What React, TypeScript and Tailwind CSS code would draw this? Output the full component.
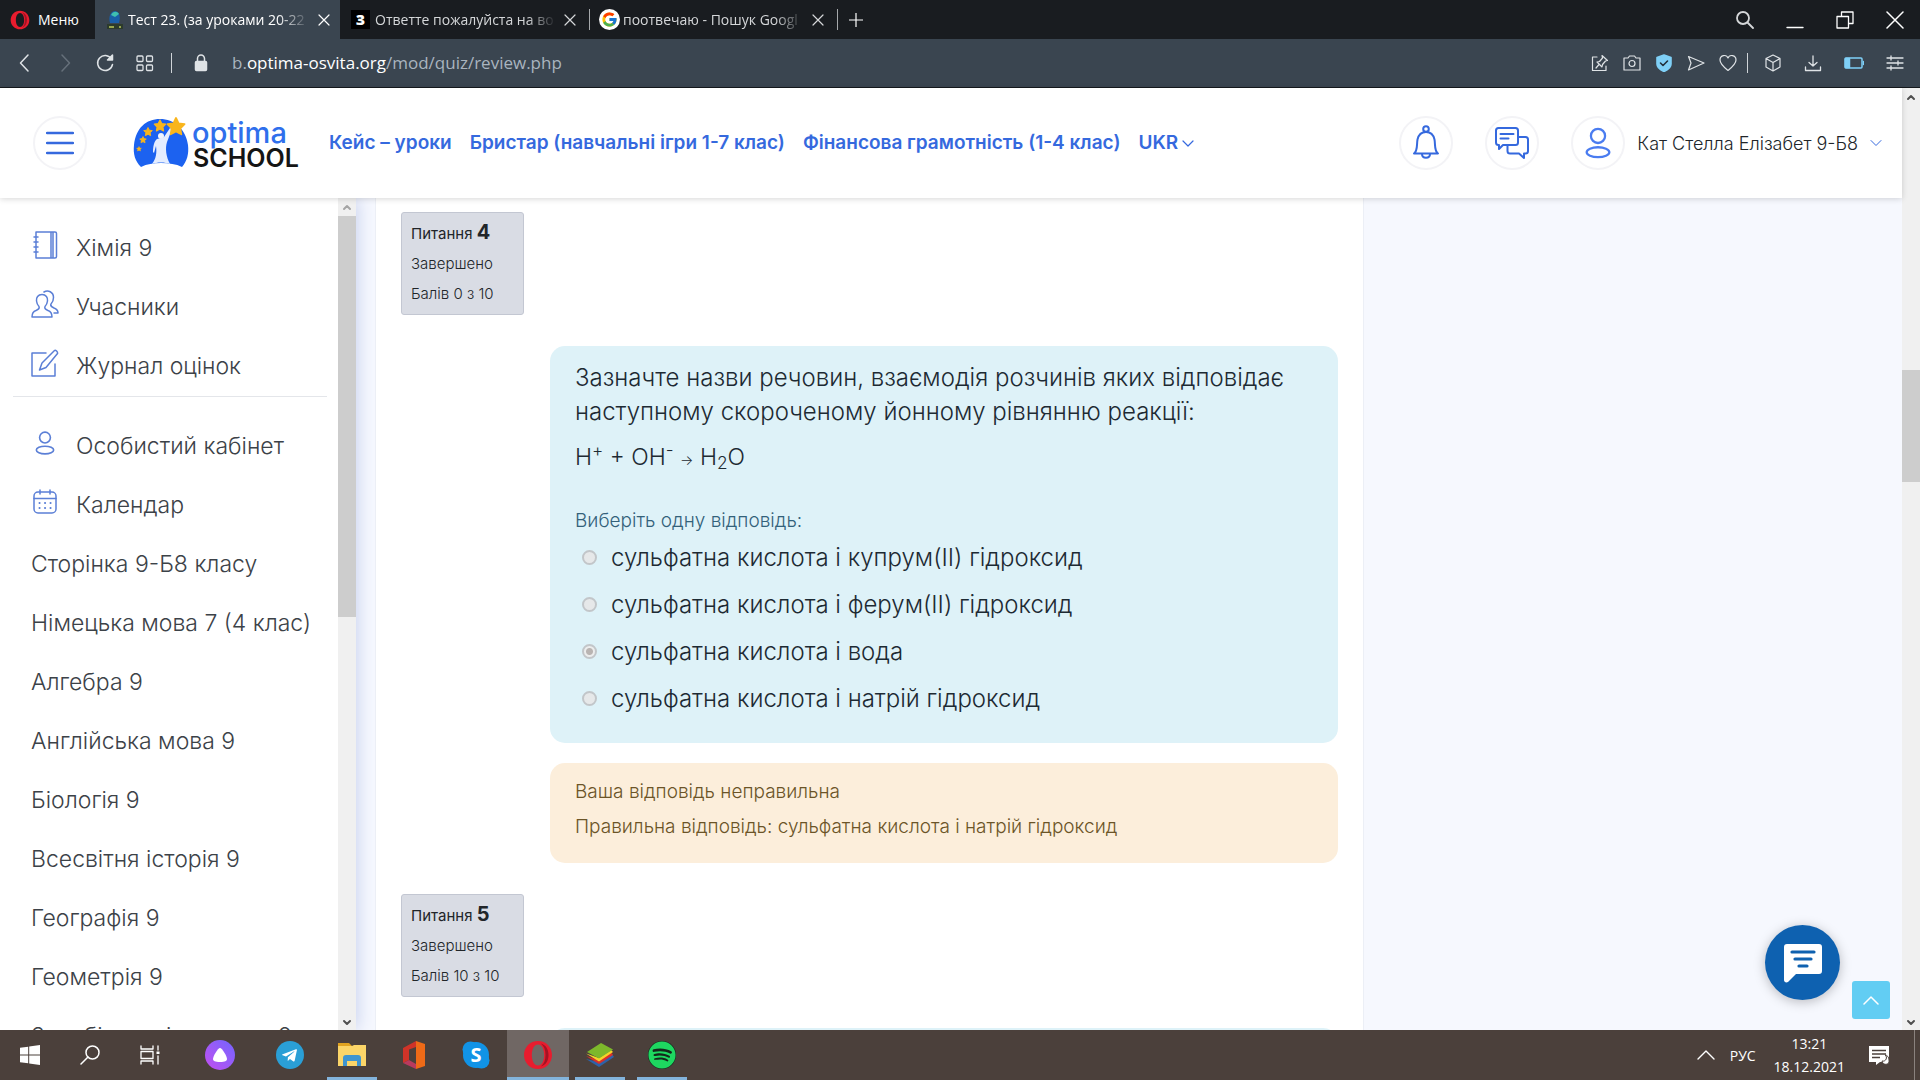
import React from "react";
import { FcGoogle } from "react-icons/fc";
import { FaSpotify, FaTelegramPlane } from "react-icons/fa";

const courses = [
  "Сторінка 9-Б8 класу",
  "Німецька мова 7 (4 клас)",
  "Алгебра 9",
  "Англійська мова 9",
  "Біологія 9",
  "Всесвітня історія 9",
  "Географія 9",
  "Геометрія 9",
  "Зарубіжна література 9",
];

const answers = [
  "сульфатна кислота і купрум(II) гідроксид",
  "сульфатна кислота і ферум(II) гідроксид",
  "сульфатна кислота і вода",
  "сульфатна кислота і натрій гідроксид",
];

const Icon = ({ size = 20, box = 24, sw = 1.5, className = "", children }: any) => (
  <svg
    width={size}
    height={size}
    viewBox={`0 0 ${box} ${box}`}
    fill="none"
    stroke="currentColor"
    strokeWidth={sw}
    strokeLinecap="round"
    strokeLinejoin="round"
    className={`shrink-0 ${className}`}
    aria-hidden="true"
  >
    {children}
  </svg>
);

const Cross = ({ size = 12 }: any) => (
  <Icon size={size} box={12} sw={1.2}>
    <path d="M1 1l10 10M11 1L1 11" />
  </Icon>
);

const OperaLogo = ({ size = 20 }: any) => (
  <svg width={size} height={size} viewBox="0 0 30 30" className="shrink-0" aria-hidden="true">
    <path
      fillRule="evenodd"
      fill="#e81c2e"
      d="M15 1C7 1 1 7.200 1 15s6 14 14 14 14-6.200 14-14S23 1 15 1zm0 3.500c3.800 0 6.200 4.700 6.200 10.500S18.800 25.500 15 25.500 8.800 20.800 8.800 15 11.200 4.500 15 4.500z"
    />
    <path fill="#a31324" d="M18 3.500c5 1.500 7.500 6 7.500 11.500S23 25 18 26.500c3-2.500 4.500-6.500 4.500-11.500S21 6 18 3.500z" />
  </svg>
);

const PersonPaths = () => (
  <>
    <circle cx="12" cy="7" r="5" />
    <ellipse cx="12" cy="18.500" rx="8" ry="3.500" />
  </>
);

const TabDivider = () => <span className="h-[21px] w-px self-center bg-[#a5a8ab]" />;

const TitleBar = () => (
  <div className="flex h-[39px] shrink-0 bg-[#191c20] text-[14px] text-white">
    <button className="flex w-[95px] items-center gap-2 pl-[10px]">
      <OperaLogo size={20} />
      Меню
    </button>
    <div className="flex w-[245px] items-center bg-[#3a4550] pr-[10px] pl-[11px]">
      <svg width="18" height="20" viewBox="0 0 18 20" className="shrink-0" aria-hidden="true">
        <path d="M4 13C2 6 5 1 9 1s6 5 4 12z" fill="#1a5fa8" />
        <path d="M5 5c2-4 6-4 8-1l-4 3z" fill="#3fc0b0" />
        <path d="M1 14h16v5H1z" fill="#2c3b2c" />
        <path d="M3 17h5M13 17h2" stroke="#b9c95b" strokeWidth="1.500" />
      </svg>
      <span className="ml-1 flex-1 overflow-hidden whitespace-nowrap [mask-image:linear-gradient(to_right,black_82%,transparent)]">
        Тест 23. (за уроками 20-22
      </span>
      <button aria-label="Закрити вкладку" className="ml-2">
        <Cross />
      </button>
    </div>
    <div className="flex w-[249px] items-center pr-[13px] pl-[11px] text-[#d5d7d9]">
      <span className="flex size-[19px] shrink-0 items-center justify-center bg-black font-extrabold text-white">
        З
      </span>
      <span className="ml-[5px] flex-1 overflow-hidden whitespace-nowrap [mask-image:linear-gradient(to_right,black_84%,transparent)]">
        Ответте пожалуйста на во
      </span>
      <button aria-label="Закрити вкладку" className="ml-2">
        <Cross />
      </button>
    </div>
    <TabDivider />
    <div className="flex w-[247px] items-center pr-[13px] pl-[9px] text-[#d5d7d9]">
      <span className="flex size-[21px] shrink-0 items-center justify-center rounded-full bg-white">
        <FcGoogle size={17} />
      </span>
      <span className="ml-[3px] flex-1 overflow-hidden whitespace-nowrap [mask-image:linear-gradient(to_right,black_84%,transparent)]">
        поотвечаю - Пошук Googl
      </span>
      <button aria-label="Закрити вкладку" className="ml-2">
        <Cross />
      </button>
    </div>
    <TabDivider />
    <button aria-label="Нова вкладка" className="pl-[11px]">
      <Icon size={14} box={14} sw={1.2}>
        <path d="M7 0v14M0 7h14" />
      </Icon>
    </button>
    <div className="ml-auto flex items-center gap-8 pr-4">
      <button aria-label="Пошук" className="text-[#d5d7d9]">
        <Icon size={18} box={18} sw={1.8}>
          <circle cx="7" cy="7" r="6" />
          <path d="M11.500 11.500L17 17" />
        </Icon>
      </button>
      <button aria-label="Згорнути">
        <Icon size={18} box={18} sw={1.4}>
          <path d="M1 16.500h16" />
        </Icon>
      </button>
      <button aria-label="Розгорнути">
        <Icon size={18} box={18} sw={1.3}>
          <path d="M1 5.500h11.500V17H1zM5.500 5V1H17v11.500h-4" />
        </Icon>
      </button>
      <button aria-label="Закрити">
        <Icon size={18} box={18} sw={1.5}>
          <path d="M1 1l16 16M17 1L1 17" />
        </Icon>
      </button>
    </div>
  </div>
);

const AddressBar = () => (
  <div className="flex h-[49px] shrink-0 items-center border-b border-[#15191d] bg-[#3a4550] text-[#dfe3e6]">
    <button aria-label="Назад" className="ml-[15px]">
      <Icon size={20} box={20}>
        <path d="M13 2L5.500 10l7.500 8" />
      </Icon>
    </button>
    <button aria-label="Вперед" className="ml-5 text-[#66707a]">
      <Icon size={20} box={20}>
        <path d="M7 2l7.500 8L7 18" />
      </Icon>
    </button>
    <button aria-label="Оновити" className="ml-5">
      <Icon size={20} box={20}>
        <path d="M16.500 6A7.500 7.500 0 1 0 17.500 11.500" />
        <path d="M17.500 2v5h-5z" fill="currentColor" />
      </Icon>
    </button>
    <button aria-label="Експрес-панель" className="ml-5">
      <Icon size={20} box={20} sw={1.3}>
        <rect x="2" y="3" width="6" height="5.500" rx="1" />
        <rect x="11.500" y="3" width="6" height="5.500" rx="1" />
        <rect x="2" y="12" width="6" height="5.500" rx="1" />
        <rect x="11.500" y="12" width="6" height="5.500" rx="1" />
      </Icon>
    </button>
    <span className="ml-4 h-5 w-px bg-[#cfd4d8]" />
    <Icon size={18} box={18} className="ml-5">
      <path d="M5.500 7V4.500a3.500 3.500 0 0 1 7 0V7" />
      <rect x="3.500" y="7.500" width="11" height="9" rx="1" fill="currentColor" />
    </Icon>
    <div className="ml-[22px] flex-1 text-[17px] text-[#a9b4bf]">
      <span>b.</span>
      <span className="text-white">optima-osvita.org</span>
      <span>/mod/quiz/review.php</span>
    </div>
    <div className="flex items-center gap-[14px]">
      <Icon size={18} box={18} sw={1.2}>
        <path d="M6 3H1.500v13.500H15V12M11 1.500l5.500 5-2 .5-3 3.500-.5 2.500-5-5 2.500-.5 3-3.500zM8 10.500L5 14" />
      </Icon>
      <Icon size={18} box={18} sw={1.2}>
        <path d="M1 4h4l1.500-2h5L13 4h4v12H1z" />
        <circle cx="9" cy="9.500" r="3" />
      </Icon>
      <Icon size={18} box={18} sw={1.6} className="text-[#7fd0f7]">
        <path d="M9 1l7 2.500V10c0 3.500-3.500 6-7 7.500C5.500 16 2 13.500 2 10V3.500z" fill="currentColor" />
        <path d="M5.500 9l2.500 2.500L12.500 7" stroke="#22303c" />
      </Icon>
      <Icon size={18} box={18} sw={1.2}>
        <path d="M1.500 2.500L17 9 1.500 16l2.500-7z" />
      </Icon>
      <Icon size={18} box={18} sw={1.2}>
        <path d="M9 16.500C4 12.500 1 9.500 1 6c0-5 6.500-6 8-2 1.500-4 8-3 8 2 0 3.500-3 6.500-8 10.500z" />
      </Icon>
    </div>
    <span className="ml-[10px] h-5 w-px bg-[#cfd4d8]" />
    <div className="ml-4 flex items-center gap-[22px] pr-4">
      <Icon size={18} box={18} sw={1.2}>
        <path d="M9 1l7 3.500v8.500l-7 4-7-4V4.500zM2 4.500l7 4 7-4M9 8.500V17" />
      </Icon>
      <Icon size={18} box={18} sw={1.3}>
        <path d="M9 2v10M5 8.500L9 12l4-3.500M1.500 13v3.500h15V13" />
      </Icon>
      <Icon size={20} box={20} sw={1.5} className="text-[#7fd0f7]">
        <rect x="1" y="5" width="17" height="10" rx="1" />
        <path d="M1.500 5.500h4v9h-4z" fill="currentColor" />
        <path d="M19.500 8.500v3" />
      </Icon>
      <Icon size={18} box={18} sw={1.3}>
        <path d="M1 4h16M1 9h16M1 14h16M5 2v4M12 7v4M5 12v4" />
      </Icon>
    </div>
  </div>
);

const Logo = () => (
  <svg width="170" height="56" viewBox="0 0 170 56" aria-label="Optima School">
    <path
      d="M8 52C2 46 0 39 1 30 3 13 13 4 27 4s26 10 28 26c1 9-1 16-6 22-6-3-13-4-21-4s-14 1-20 4z"
      fill="#1c62f0"
    />
    <circle cx="28" cy="21" r="3" fill="#f0f5ff" />
    <path
      d="M24 24c3-1 6-1 7-2l6-9 2 1-5 13c-2 6-1 15 3 22-5-2-13-2-18 0 4-5 5-11 4-18l-2 7-1-1c0-5 1-11 4-13z"
      fill="#e4edff"
    />
    {[
      [6, 34, 2.5],
      [10, 25, 3.5],
      [15, 17, 4.5],
      [27, 11, 6],
      [43, 12, 9],
    ].map(([x, y, r]) => (
      <polygon
        key={x}
        transform={`translate(${x} ${y}) scale(${r})`}
        points="0,-1 .29,-.4 .95,-.31 .48,.16 .59,.81 0,.5 -.59,.81 -.48,.16 -.95,-.31 -.29,-.4"
        fill="#f9b51c"
        stroke="#f9b51c"
        strokeWidth=".2"
        strokeLinejoin="round"
      />
    ))}
    <text x="59" y="28" fontFamily="Inter, sans-serif" fontSize="29" fontWeight="500" fill="#2f6fec">
      optima
    </text>
    <text x="60" y="52" fontFamily="Inter, sans-serif" fontSize="25" fontWeight="600" fill="#151515">
      SCHOOL
    </text>
  </svg>
);

const RoundButton = ({ label, children }: any) => (
  <button
    aria-label={label}
    className="flex size-[54px] shrink-0 items-center justify-center rounded-full border-2 border-[#f3f3f6] text-[#3569de]"
  >
    {children}
  </button>
);

const SiteHeader = () => (
  <header className="relative z-10 flex h-[110px] shrink-0 items-center bg-white pr-[20px] pl-[33px] shadow-[0_1px_6px_rgba(0,0,0,0.16)]">
    <RoundButton label="Меню сайту">
      <Icon size={28} box={28} sw={2.4}>
        <path d="M1 4h26M1 14h26M1 24h26" />
      </Icon>
    </RoundButton>
    <a href="#" className="ml-[46px]">
      <Logo />
    </a>
    <nav className="ml-[26px] flex items-center gap-[18px] text-[19px] font-semibold whitespace-nowrap text-[#3569de]">
      <a href="#">Кейс – уроки</a>
      <a href="#">Бристар (навчальні ігри 1-7 клас)</a>
      <a href="#">Фінансова грамотність (1-4 клас)</a>
      <button className="flex items-center gap-1">
        UKR
        <Icon size={12} box={12} sw={1.2}>
          <path d="M1 4l5 5 5-5" />
        </Icon>
      </button>
    </nav>
    <div className="ml-auto flex items-center gap-8">
      <RoundButton label="Сповіщення">
        <Icon size={36} box={36} sw={2}>
          <circle cx="18" cy="4" r="2.800" />
          <path d="M6 28.500c4-3 2.500-9 3.500-14 1-4.500 4-7.500 8.500-7.500s7.500 3 8.500 7.500c1 5-.5 11 3.500 14zM14 29c0 5 8 5 8 0" />
        </Icon>
      </RoundButton>
      <RoundButton label="Повідомлення">
        <Icon size={34} box={34} sw={2}>
          <path d="M13 19H8l-4 4v-4H3.500C2 19 1 18 1 16.500v-12C1 3 2 2 3.500 2h17C22 2 23 3 23 4.500v12c0 1.500-1 2.500-2.500 2.500z" />
          <path d="M23 11h7.500c1.500 0 2.500 1 2.500 2.500V25c0 1.500-1 2.500-2.500 2.500H29v4.500l-5-4.500h-9c-1.500 0-2.500-1-2.500-2.500v-5M5.500 8h13M5.500 12.500h8" />
        </Icon>
      </RoundButton>
      <button className="flex items-center gap-3 text-[18px] font-light text-[#212529]">
        <span className="flex size-[54px] items-center justify-center rounded-full border-2 border-[#f3f3f6] text-[#4a7cf0]">
          <Icon size={34} sw={1.6}>
            <PersonPaths />
          </Icon>
        </span>
        Кат Стелла Елізабет 9-Б8
        <Icon size={12} box={12} sw={1} className="text-[#3569de]">
          <path d="M1 3.500l5 5 5-5" />
        </Icon>
      </button>
    </div>
  </header>
);

const Scroller = ({ space, thumb, dimTop }: any) => (
  <div className="flex w-[18px] shrink-0 flex-col items-center bg-[#f0f0f0]">
    <Icon size={10} box={10} sw={2} className={dimTop ? "my-1 text-[#a5a5a5]" : "my-1 text-[#505050]"}>
      <path d="M2 7l3-3 3 3" />
    </Icon>
    <div className={space} />
    <div className={`w-full bg-[#cdcdcd] ${thumb}`} />
    <Icon size={10} box={10} sw={2} className="mt-auto mb-[2px] text-[#505050]">
      <path d="M2 3l3 3 3-3" />
    </Icon>
  </div>
);

const MenuLink = ({ label, children }: any) => (
  <li>
    <a href="#" className="flex h-[59px] items-center pl-[31px] whitespace-nowrap">
      {children && <span className="-mt-2 mr-[17px] flex w-7 justify-center text-[#5b7fd6]">{children}</span>}
      {label}
    </a>
  </li>
);

const Sidebar = () => (
  <aside className="relative flex w-[356px] shrink-0 bg-white shadow-[2px_0_16px_#c9d2ee]">
    <nav className="flex-1 overflow-hidden pt-[21px] text-[23px] font-light text-[#3c4248]">
      <ul>
        <MenuLink label="Хімія 9">
          <Icon size={28} box={28}>
            <path d="M5 1h19c1 0 1.500.5 1.500 1.500v23c0 1-.5 1.500-1.500 1.500H5zM20 1v26M22 1v26M3 6h4M3 11h4M3 16h4M3 21h4" />
          </Icon>
        </MenuLink>
        <MenuLink label="Учасники">
          <Icon size={28} box={28}>
            <path d="M11 4.500c-4 0-6 3-5.500 6.500.3 2.500 1 4 2.500 5.500 1 2-1 3-3 4-3 1-4 2.500-4 6.500h20c0-4-1-5.500-4-6.500-2-1-4-2-3-4 1.500-1.500 2.200-3 2.500-5.500.5-3.500-1.500-6.500-5.500-6.500z" />
            <path d="M13 2c4-2.500 9.500 0 9.500 5.500 0 3-1 5-2.500 6.500-1 2 1 3 3 4 3 1 4 2 4 5h-4" />
          </Icon>
        </MenuLink>
        <MenuLink label="Журнал оцінок">
          <Icon size={28} box={28}>
            <path d="M15 4H1v23h23V15M23.500 1.500c1-1 3.500 1.500 3 3L15 18.500 8.500 21l2.500-7z" />
          </Icon>
        </MenuLink>
      </ul>
      <hr className="mr-[11px] mb-[20px] ml-[13px] border-[#e4e6ea]" />
      <ul>
        <MenuLink label="Особистий кабінет">
          <Icon size={26} box={24}>
            <PersonPaths />
          </Icon>
        </MenuLink>
        <MenuLink label="Календар">
          <Icon size={26} box={26}>
            <rect x="2" y="3" width="22" height="21" rx="4" />
            <path d="M2 9.500h22M8 1v4M18 1v4" />
            <path d="M7.500 14h.1M13 14h.1M18.500 14h.1M7.500 19h.1M13 19h.1M18.500 19h.1" strokeWidth="2" />
          </Icon>
        </MenuLink>
        {courses.map((name) => (
          <MenuLink key={name} label={name} />
        ))}
      </ul>
    </nav>
    <Scroller space="" thumb="h-[401px]" dimTop />
  </aside>
);

const QuestionInfo = ({ number, grade }: any) => (
  <div className="w-[123px] shrink-0 self-start rounded-[3px] border border-[#c3c7d2] bg-[#d9dce4] pt-[6px] pb-[5px] pl-[9px] text-[15px] leading-[30px] font-light text-[#212529]">
    <h3 className="font-normal">
      Питання <span className="text-[20px] leading-none font-bold">{number}</span>
    </h3>
    <div>Завершено</div>
    <div>{grade}</div>
  </div>
);

const QuestionFour = () => (
  <section className="flex gap-[26px]">
    <QuestionInfo number="4" grade="Балів 0 з 10" />
    <div className="mt-[134px] min-w-0 flex-1">
      <div className="rounded-[15px] bg-[#def2f8] px-[25px] pt-[15px] pb-[21px] text-[24px] leading-[34px] font-light text-[#1d2a33]">
        <p>
          Зазначте назви речовин, взаємодія розчинів яких відповідає наступному скороченому йонному рівнянню реакції:
        </p>
        <p className="mt-[11px] text-[23px]">
          H<sup>+</sup> + OH<sup>-</sup> <span className="text-sm">→</span> H<sub>2</sub>O
        </p>
        <fieldset className="mt-[34px]">
          <legend className="text-[19px] leading-[26px] text-[#33617a]">Виберіть одну відповідь:</legend>
          {answers.map((answer, i) => (
            <div key={answer} className="flex h-[47px] items-center pl-[7px]">
              <input
                type="radio"
                id={`q4-${i}`}
                name="q4"
                disabled
                defaultChecked={i === 2}
                className="size-[15px] appearance-none rounded-full border-2 border-[#c2c6c9] bg-[#e6e8e9] checked:bg-[radial-gradient(circle,#b9b4b2_3px,#eceded_4px)]"
              />
              <label htmlFor={`q4-${i}`} className="ml-[14px]">
                {answer}
              </label>
            </div>
          ))}
        </fieldset>
      </div>
      <div className="mt-5 rounded-[15px] bg-[#fceedb] px-[25px] pt-[11px] pb-[19px] text-[19px] leading-[35px] font-light text-[#6b5427]">
        <p>Ваша відповідь неправильна</p>
        <p>Правильна відповідь: сульфатна кислота і натрій гідроксид</p>
      </div>
    </div>
  </section>
);

const TaskItem = ({ label, open, active, children }: any) => (
  <button
    aria-label={label}
    className={`relative flex h-full w-[62px] items-center justify-center ${active ? "bg-[#706764]" : ""}`}
  >
    {children}
    {open && (
      <span className={`absolute bottom-0 h-[3px] bg-[#83b4dc] ${active ? "inset-x-0" : "inset-x-[6px]"}`} />
    )}
  </button>
);

const Taskbar = () => (
  <footer className="relative z-20 flex h-[50px] shrink-0 items-center bg-[#4b403b] text-white">
    <button aria-label="Пуск" className="flex w-[60px] justify-center">
      <svg width="20" height="20" viewBox="0 0 20 20" fill="#fff" aria-hidden="true">
        <path d="M0 2.800L8.200 1.700v7.800H0zM9.200 1.500L20 0v9.500H9.200zM0 10.500h8.200v7.800L0 17.200zM9.200 10.500H20V20L9.200 18.500z" />
      </svg>
    </button>
    <button aria-label="Пошук" className="flex w-[60px] justify-center">
      <Icon size={20} box={20}>
        <circle cx="12.500" cy="7.500" r="6.500" />
        <path d="M8 12L1 19" />
      </Icon>
    </button>
    <button aria-label="Подання завдань" className="flex w-[60px] justify-center">
      <Icon size={20} box={20} sw={1.3}>
        <path d="M1 1v3h12V1M1 19v-3h12v3M1 6.500h12v7H1zM18 1v4M18 11v8" />
        <path d="M16.500 6.500h3v2.500h-3z" fill="currentColor" stroke="none" />
      </Icon>
    </button>
    <button aria-label="Аліса" className="flex w-[79px] justify-center">
      <span className="flex size-[30px] items-center justify-center rounded-full bg-linear-to-tr from-[#c14cf0] to-[#6f63ff]">
        <svg width="16" height="16" viewBox="0 0 16 16" aria-hidden="true">
          <path d="M8 1C6 1 1 9 1 12c0 2 2 3 7 3s7-1 7-3c0-3-5-11-7-11z" fill="#fff" />
        </svg>
      </span>
    </button>
    <TaskItem label="Telegram">
      <span className="flex size-[28px] items-center justify-center rounded-full bg-[#2a9fd6]">
        <FaTelegramPlane size={17} className="-ml-[2px]" />
      </span>
    </TaskItem>
    <TaskItem label="Провідник" open>
      <svg width="28" height="26" viewBox="0 0 28 26" aria-hidden="true">
        <path d="M0 1h11l3 3H0z" fill="#e0a321" />
        <path d="M0 4h14l2-1h12v21H0z" fill="#fbd568" />
        <path d="M5 24V16c0-2 1-3 3-3h12c2 0 3 1 3 3v8h-4v-5H9v5z" fill="#3f95cf" />
      </svg>
    </TaskItem>
    <TaskItem label="Office">
      <svg width="24" height="28" viewBox="0 0 24 28" aria-hidden="true">
        <path d="M14 0l9 3v22l-9 3z" fill="#ee6a17" />
        <path d="M1 7L14 0v6l-7 2.500V19l-6 3z" fill="#cf3328" />
        <path d="M1 22l6-3 7 4v5z" fill="#b83a5e" />
      </svg>
    </TaskItem>
    <TaskItem label="Skype">
      <svg width="28" height="28" viewBox="0 0 28 28" aria-hidden="true">
        <g fill="#1193e6">
          <circle cx="8.500" cy="8.500" r="8" />
          <circle cx="19.500" cy="19.500" r="8" />
          <circle cx="14" cy="14" r="13" />
        </g>
        <text x="14" y="21" textAnchor="middle" fontFamily="Open Sans, sans-serif" fontSize="20" fontWeight="700" fill="#fff">
          S
        </text>
      </svg>
    </TaskItem>
    <TaskItem label="Opera" open active>
      <OperaLogo size={30} />
    </TaskItem>
    <TaskItem label="BlueStacks" open>
      <svg width="28" height="24" viewBox="0 0 28 24" aria-hidden="true">
        <path d="M0 16l13 8 15-10-2-3-13 8z" fill="#2e62a8" />
        <path d="M0 13l13 8 14-9-2-3-12 8z" fill="#d9302b" />
        <path d="M0 10.500l13 8L27 9l-2-2-12 8z" fill="#f5d328" />
        <path d="M1 9L15 0l12 6.500-14 9z" fill="#7db82b" />
      </svg>
    </TaskItem>
    <TaskItem label="Spotify" open>
      <span className="rounded-full bg-[#14261b]">
        <FaSpotify size={28} className="text-[#1ed760]" />
      </span>
    </TaskItem>
    <div className="ml-auto flex h-full items-center">
      <button aria-label="Приховані піктограми">
        <Icon size={18} box={18} sw={1.4}>
          <path d="M1 13l8-8 8 8" />
        </Icon>
      </button>
      <span className="ml-[15px] text-[14px]">РУС</span>
      <div className="ml-[18px] text-center text-[14px] leading-[23px]">
        <div>13:21</div>
        <div>18.12.2021</div>
      </div>
      <button aria-label="Центр сповіщень" className="ml-[23px]">
        <svg width="22" height="22" viewBox="0 0 22 22" aria-hidden="true">
          <path d="M1 2h20v16H12l-4 3v-3H1z" fill="#fff" />
          <path d="M4 6.500h14M4 10h14M4 13.500h8" stroke="#4b403b" strokeWidth="1.300" />
          <path d="M17 11c3 2 1 7-3 6 1 5 8 4 7-1 0-3-2-5-4-5z" fill="#fff" stroke="#4b403b" />
        </svg>
      </button>
      <span className="mr-[5px] ml-[24px] h-full w-px bg-[#8a827e]" />
    </div>
  </footer>
);

export default function App() {
  return (
    <div className="flex h-screen flex-col overflow-hidden font-['Open_Sans',sans-serif]">
      <TitleBar />
      <AddressBar />
      <div className="flex min-h-0 flex-1 bg-[#f6f8fe] font-['Inter',sans-serif]">
        <div className="relative flex min-w-0 flex-1 flex-col">
          <SiteHeader />
          <div className="flex min-h-0 flex-1">
            <Sidebar />
            <main className="ml-[19px] flex min-w-0 flex-1 flex-col gap-[31px] overflow-hidden border-x border-[#eceff6] bg-white px-[25px] pt-[14px]">
              <QuestionFour />
              <section className="flex gap-[26px]">
                <QuestionInfo number="5" grade="Балів 10 з 10" />
                <div className="mt-[134px] h-[200px] flex-1 rounded-[15px] bg-[#def2f8]" />
              </section>
            </main>
            <div className="w-[538px] shrink-0" />
          </div>
          <button
            aria-label="Чат"
            className="absolute right-[62px] bottom-[30px] flex size-[75px] items-center justify-center rounded-full bg-[#0e61b0] shadow-[0_2px_12px_rgba(0,0,0,0.25)]"
          >
            <svg width="38" height="40" viewBox="0 0 38 40" aria-hidden="true">
              <path d="M3 1h32c2 0 3 1 3 3v24c0 2-1 3-3 3H12l-8 8c-2 1-4 0-4-2V4c0-2 1-3 3-3z" fill="#fff" />
              <path d="M8 9h22M11 16h16M15 23h8" stroke="#0e61b0" strokeWidth="3.200" strokeLinecap="round" />
            </svg>
          </button>
          <button
            aria-label="Вгору"
            className="absolute right-[12px] bottom-[11px] flex size-[38px] items-center justify-center rounded-[3px] bg-[#62cdf3] text-white"
          >
            <Icon size={16} box={16} sw={1.5}>
              <path d="M1 12l7-7 7 7" />
            </Icon>
          </button>
        </div>
        <Scroller space="h-[264px]" thumb="h-[112px]" />
      </div>
      <Taskbar />
    </div>
  );
}
